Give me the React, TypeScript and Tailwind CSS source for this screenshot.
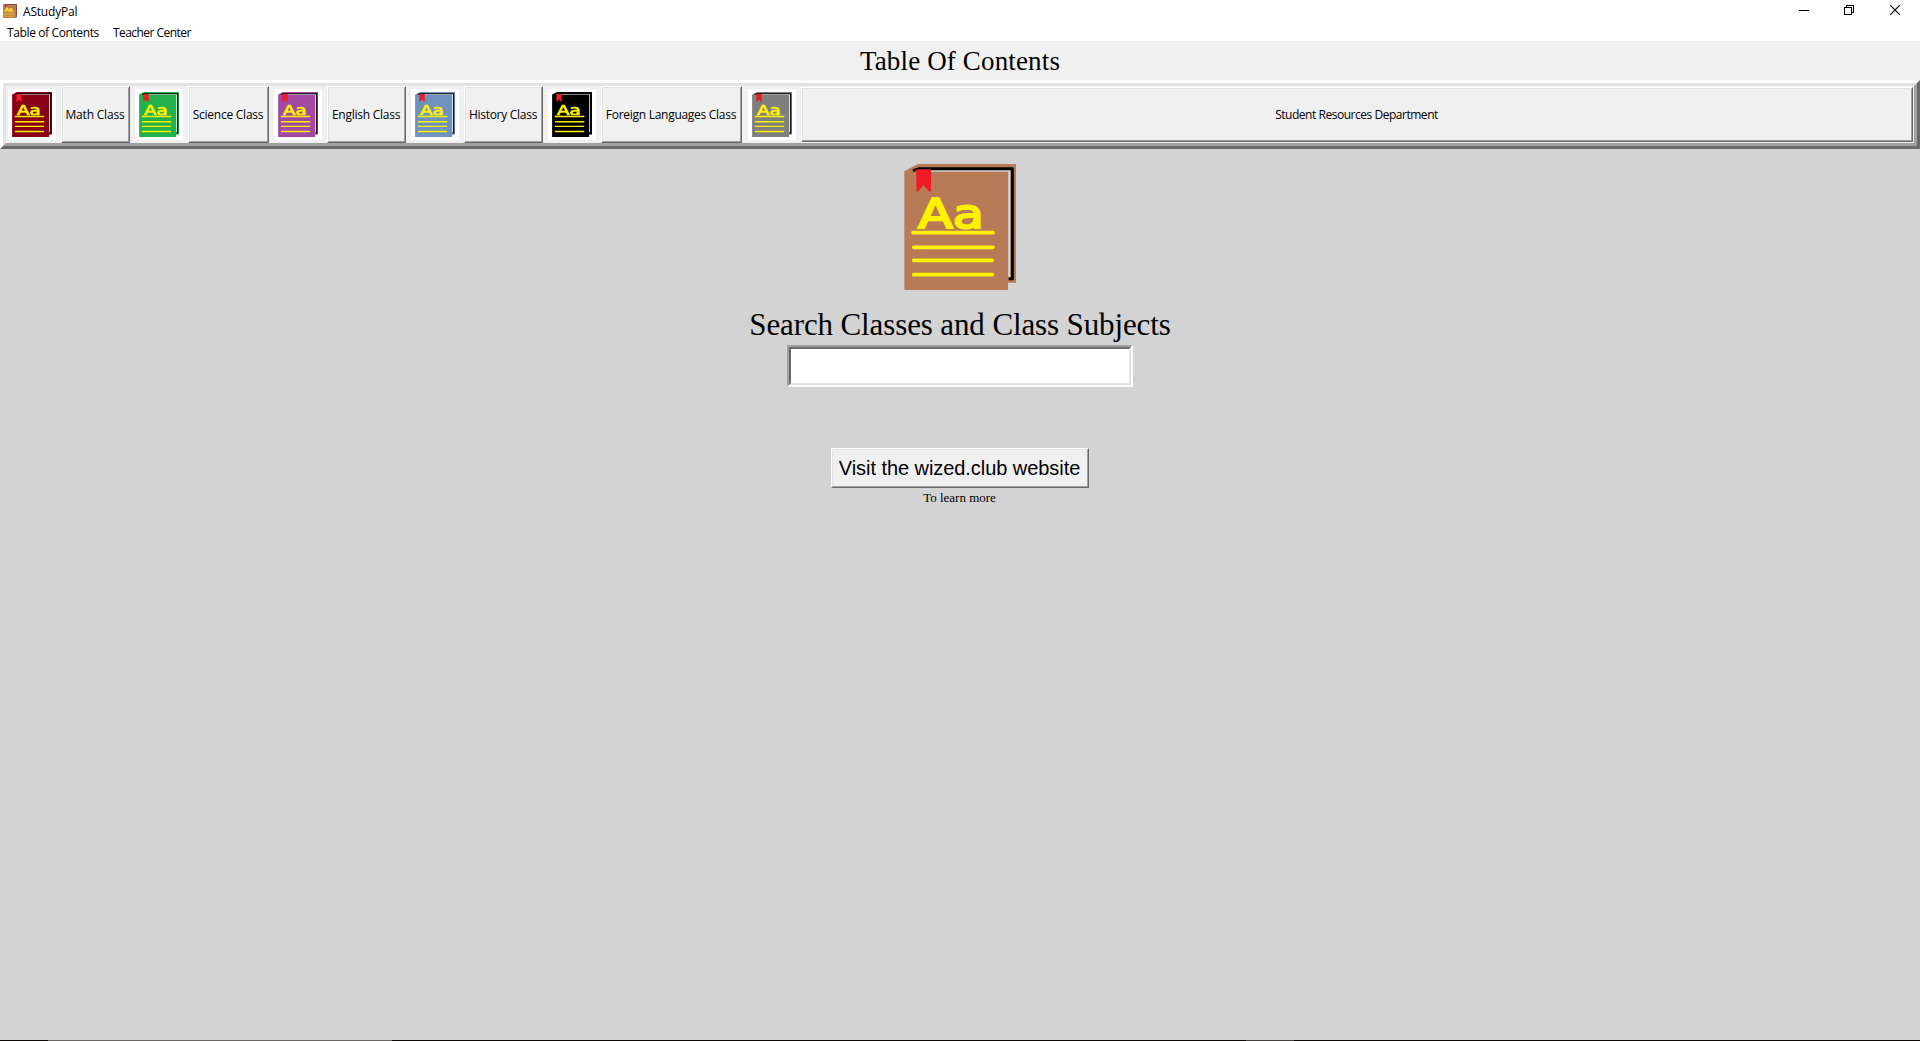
import type { ReactNode } from "react";

type BookProps = { color: string; gap: string; className: string; stretch?: boolean };

function Book({ color, gap, className, stretch }: BookProps) {
  return (
    <svg viewBox="70 42 336 378" preserveAspectRatio={stretch ? "none" : "xMidYMid meet"} className={className}>
      <path d="M71 64L112 42H406V398H382V420H71Z" fill={color} />
      <path d="M150 61.500H386V382" fill="none" stroke={gap} strokeWidth="7" />
      <path d="M97 62L116 56H395V386H384" fill="none" stroke="#000" strokeWidth="9" strokeLinejoin="round" />
      <path d="M107 58H151V121L147 126L128 106L111 125L107 122Z" fill="#ed1c24" />
      <text
        x="112"
        y="234"
        fontFamily="DejaVu Sans, sans-serif"
        fontSize="122"
        textLength="198"
        lengthAdjust="spacingAndGlyphs"
        fill="#fff200"
        stroke="#fff200"
        strokeWidth="6"
      >
        Aa
      </text>
      <path d="M97 248H337M99 292H337M99 331H335M99 374H335" stroke="#fff200" strokeWidth="11" strokeLinecap="round" />
    </svg>
  );
}

function Raised({ children, className }: { children: ReactNode; className: string }) {
  return (
    <button className={`flex border border-t-white border-l-white border-r-[#696969] border-b-[#696969] ${className}`}>
      <span className="flex h-full w-full items-center justify-center whitespace-nowrap border border-t-[#e3e3e3] border-l-[#e3e3e3] border-r-[#a0a0a0] border-b-[#a0a0a0] bg-[#f0f0f0] pr-px">
        {children}
      </span>
    </button>
  );
}

const classes = [
  { name: "Math Class", color: "#880015", cell: "ml-[2px] mr-[5px]", width: "w-[69px]", track: "tracking-[-0.2px]" },
  { name: "Science Class", color: "#22b14c", cell: "mx-[5px]", width: "w-[81px]", track: "tracking-[-0.25px]" },
  { name: "English Class", color: "#a349a4", cell: "mx-[5px]", width: "w-[79px]", track: "tracking-[-0.25px]" },
  { name: "History Class", color: "#7092be", cell: "mx-[5px]", width: "w-[79px]", track: "tracking-[-0.28px]" },
  { name: "Foreign Languages Class", color: "#000000", cell: "mx-[5px]", width: "w-[141px]", track: "tracking-[-0.28px]" },
];

function Tile({ color, cell }: { color: string; cell: string }) {
  return (
    <div className={`mt-[3px] h-[51px] w-[48px] shrink-0 bg-white pl-1 pt-[3px] ${cell}`}>
      <Book color={color} gap="#ffffff" stretch className="h-[45px] w-[40px]" />
    </div>
  );
}

export default function App() {
  return (
    <div className="flex h-[1041px] w-[1920px] flex-col overflow-hidden bg-[#d3d3d3] font-['Open_Sans',sans-serif] text-[12px] leading-4 text-black">
      <header className="h-[41px] bg-white">
        <div className="flex h-[25px] items-start justify-between">
          <div className="flex pl-[3px]">
            <Book color="#b97a57" gap="#b97a57" stretch className="mt-1 h-[14px] w-[14px]" />
            <span className="ml-[6px] mt-[4px] tracking-[-0.2px]">AStudyPal</span>
          </div>
          <div className="flex gap-[34px] pr-[19px] pt-[4px]">
            <svg className="-mr-px h-3 w-3" viewBox="0 0 12 12" shapeRendering="crispEdges">
              <path d="M1 6.500H11" stroke="#000" />
            </svg>
            <svg className="h-3 w-3" viewBox="0 0 12 12" fill="none" stroke="#000" shapeRendering="crispEdges">
              <path d="M1.500 3.500H8.500V10.500H1.500ZM3.500 3V1.500H10.500V8.500H9" />
            </svg>
            <svg className="h-3 w-3" viewBox="0 0 12 12" fill="none" stroke="#000" strokeWidth="1.100">
              <path d="M1.200 1.200L10.800 10.800M10.800 1.200L1.200 10.800" />
            </svg>
          </div>
        </div>
        <nav className="flex whitespace-nowrap pl-[7px]">
          <span className="w-[106px] tracking-[-0.38px]">Table of Contents</span>
          <span className="tracking-[-0.55px]">Teacher Center</span>
        </nav>
      </header>

      <h1 className="h-[39px] bg-[#f0f0f0] pt-[6px] text-center font-['Liberation_Serif',serif] text-[27px] leading-[29px] tracking-[0.15px]">
        Table Of Contents
      </h1>

      <div className="h-[69px] border-[3px] border-t-white border-l-white border-r-[#696969] border-b-[#696969]">
        <div className="flex h-full border-[3px] border-t-[#e3e3e3] border-l-[#e3e3e3] border-r-[#a0a0a0] border-b-[#a0a0a0] bg-[#f0f0f0]">
          {classes.map((c) => (
            <div key={c.name} className="flex">
              <Tile color={c.color} cell={c.cell} />
              <Raised className={`h-full shrink-0 ${c.width} ${c.track}`}>{c.name}</Raised>
            </div>
          ))}
          <Tile color="#7f7f7f" cell="ml-[6px] mr-[5px]" />
          <Raised className="my-px mr-px h-[55px] flex-1 tracking-[-0.47px]">Student Resources Department</Raised>
        </div>
      </div>

      <main className="flex flex-1 flex-col items-center">
        <Book color="#b97a57" gap="#d3d3d3" className="mr-px mt-[15px] h-[126px] w-[112px]" />
        <h2 className="mt-[17px] h-[38px] font-['Liberation_Serif',serif] text-[31px] leading-[36px] tracking-[-0.12px]">
          Search Classes and Class Subjects
        </h2>
        <div className="h-[42px] w-[346px] border-2 border-t-[#a0a0a0] border-l-[#a0a0a0] border-r-white border-b-white">
          <input
            aria-label="Search"
            className="block h-full w-full border-2 border-t-[#696969] border-l-[#696969] border-r-[#e3e3e3] border-b-[#e3e3e3] bg-white px-1 text-xl outline-none"
          />
        </div>
        <Raised className="mt-[61px] h-[40px] w-[258px] font-['Liberation_Sans',sans-serif] text-[20px] tracking-[-0.06px]">
          Visit the wized.club website
        </Raised>
        <p className="mt-[2px] pr-px font-['Liberation_Serif',serif] text-[13px]">To learn more</p>
      </main>

      <footer className="flex h-px bg-[#0c0808]">
        <div className="ml-12 w-[344px] bg-[#6b6767]" />
        <div className="ml-[854px] w-[48px] bg-[#454141]" />
      </footer>
    </div>
  );
}
